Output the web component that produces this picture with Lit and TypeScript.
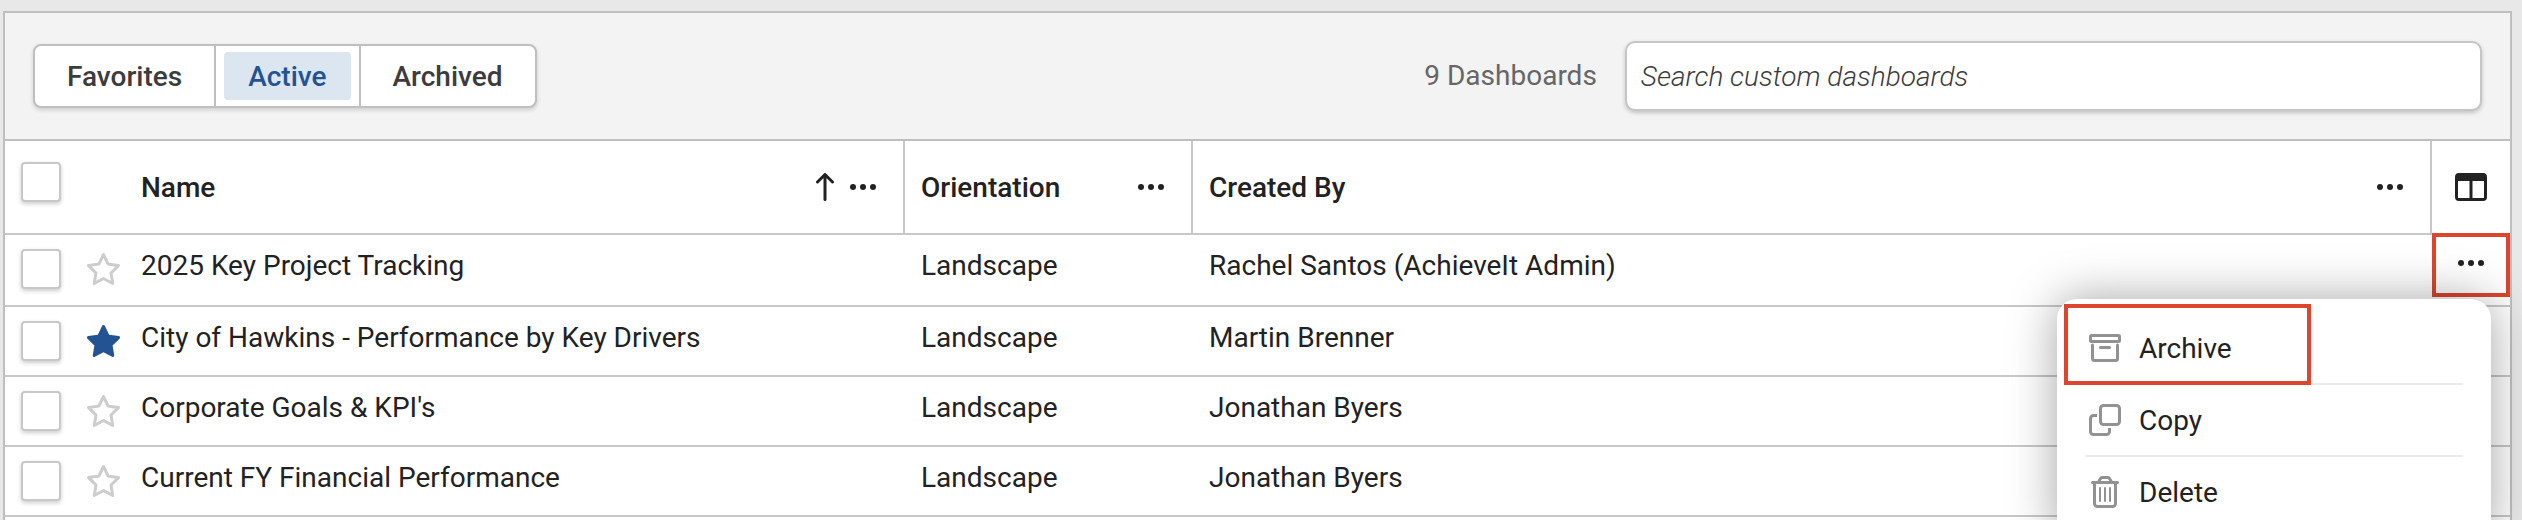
import { LitElement, html, css, svg, nothing } from "lit";
import { customElement, state } from "lit/decorators.js";

interface Dashboard {
  name: string;
  orientation: string;
  createdBy: string;
  favorite: boolean;
}

const DASHBOARDS: Dashboard[] = [
  { name: "2025 Key Project Tracking", orientation: "Landscape", createdBy: "Rachel Santos (AchieveIt Admin)", favorite: false },
  { name: "City of Hawkins - Performance by Key Drivers", orientation: "Landscape", createdBy: "Martin Brenner", favorite: true },
  { name: "Corporate Goals & KPI's", orientation: "Landscape", createdBy: "Jonathan Byers", favorite: false },
  { name: "Current FY Financial Performance", orientation: "Landscape", createdBy: "Jonathan Byers", favorite: false },
];

const TABS = ["Favorites", "Active", "Archived"];

const STAR_OUTER =
  "M287.9 0c9.2 0 17.6 5.2 21.6 13.5l68.6 141.3 153.2 22.6c9 1.3 16.5 7.6 19.3 16.3s.5 18.1-5.9 24.5L433.6 328.4l26.2 155.6c1.5 9-2.2 18.1-9.7 23.5s-17.3 6-25.3 1.7l-137-73.2L151 509.1c-8.1 4.3-17.9 3.7-25.3-1.7s-11.2-14.5-9.7-23.5l26.2-155.6L31.1 218.2c-6.5-6.4-8.7-15.9-5.9-24.5s10.3-14.9 19.3-16.3l153.2-22.6L266.3 13.5C270.4 5.2 278.7 0 287.9 0z";
const STAR_INNER =
  "M287.9 79L235.4 187.2c-3.5 7.1-10.2 12.1-18.1 13.3L99 217.9 184.9 303c5.5 5.5 8.1 13.3 6.8 21L171.4 443.7l105.2-56.2c7.1-3.8 15.6-3.8 22.6 0l105.2 56.2L384.2 324.1c-1.3-7.7 1.2-15.5 6.8-21l85.9-85.1L358.6 200.5c-7.8-1.2-14.6-6.1-18.1-13.3L287.9 79z";

const dots = html`<svg class="dots" viewBox="0 0 26 6" width="26" height="6" aria-hidden="true">
  <circle cx="3" cy="3" r="3" /><circle cx="13" cy="3" r="3" /><circle cx="23" cy="3" r="3" />
</svg>`;

const star = (on: boolean) => html`<svg class="star ${on ? "on" : ""}" viewBox="24 0 528 512" width="33" height="32" aria-hidden="true">
  <path fill-rule="evenodd" d=${on ? STAR_OUTER : STAR_OUTER + STAR_INNER} />
</svg>`;

const arrowUp = html`<svg class="line" viewBox="0 0 18 28" width="18" height="28" aria-hidden="true">
  <path d="M9 26.500V2M1.500 9L9 1.500L16.500 9" />
</svg>`;

const columnsIcon = html`<svg viewBox="0 0 32 28" width="32" height="28" aria-hidden="true">
  <path fill-rule="evenodd" d="M4 0h24a4 4 0 0 1 4 4v20a4 4 0 0 1-4 4H4a4 4 0 0 1-4-4V4a4 4 0 0 1 4-4zM3 8v16.500a.5.5 0 0 0 .5.5H14.500V8zM17.500 8v17H28.500a.5.5 0 0 0 .5-.5V8z" />
</svg>`;

const ICONS = {
  archive: svg`<rect x="1.500" y="3.500" width="29" height="6" rx="1" />
    <path d="M3.500 13v13.500a2 2 0 0 0 2 2h21a2 2 0 0 0 2-2V13M11.500 15.500h9" />`,
  copy: svg`<rect x="11.500" y="1.500" width="19" height="19" rx="3" />
    <path class="butt" d="M8 11.500H4.500a3 3 0 0 0-3 3v13a3 3 0 0 0 3 3h13a3 3 0 0 0 3-3V24" />`,
  trash: svg`<path d="M3.500 6.500h25M9.500 6l2-3.500a2 2 0 0 1 1.800-1h5.400a2 2 0 0 1 1.800 1l2 3.500M5.500 7v20.500a3 3 0 0 0 3 3h15a3 3 0 0 0 3-3V7" />
    <path class="thin" d="M11 12v13M16 12v13M21 12v13" />`,
};

const MENU: { label: string; icon: keyof typeof ICONS }[] = [
  { label: "Archive", icon: "archive" },
  { label: "Copy", icon: "copy" },
  { label: "Delete", icon: "trash" },
];

@customElement("app-root")
export class AppRoot extends LitElement {
  @state() private tab = "Active";

  static styles = css`
    :host {
      display: flex;
      height: 100vh;
      overflow: hidden;
      box-sizing: border-box;
      padding: 11px 10px 0 3px;
      background: #e8e8e8;
      color: #222;
      font: 400 28px/42px Roboto, sans-serif;
    }
    * { box-sizing: border-box; }
    button, input { font: inherit; color: inherit; margin: 0; }
    button { border: 0; padding: 0; background: none; cursor: pointer; }
    svg { display: block; fill: currentColor; }

    .panel {
      flex: 1;
      min-width: 0;
      background: #fff;
      border: 2px solid #bfbfbf;
      border-bottom: 0;
    }
    .toolbar {
      display: flex;
      align-items: center;
      padding: 28px;
      height: 128px;
      background: #f3f3f3;
      border-bottom: 2px solid #bfbfbf;
    }
    .tabs {
      display: flex;
      height: 64px;
      border: 2px solid #bfbfbf;
      border-radius: 8px;
      background: #fff;
      box-shadow: 0 2px 4px rgba(0, 0, 0, 0.16);
    }
    .tab {
      display: flex;
      padding: 6px 8px;
      color: #3c3c3c;
      font-weight: 500;
    }
    .tab + .tab { border-left: 2px solid #bfbfbf; }
    .tab span {
      display: flex;
      align-items: center;
      padding: 2px 24px 0;
      border-radius: 4px;
    }
    .tab.selected span { background: #dce6f0; color: #235393; }
    .count { margin-left: auto; color: #666; }
    .search {
      width: 35%;
      height: 70px;
      margin-left: 28px;
      padding: 0 14px;
      border: 2px solid #c6c6c6;
      border-radius: 10px;
      background: #fff;
      box-shadow: 0 2px 4px rgba(0, 0, 0, 0.2);
      outline: none;
    }
    .search::placeholder {
      color: #3c3c3c;
      font-style: italic;
      font-weight: 300;
      opacity: 1;
    }

    .grid {
      width: 100%;
      table-layout: fixed;
      border-collapse: separate;
      border-spacing: 0;
    }
    .c-check { width: 66px; }
    .c-star { width: 54px; }
    .c-name { width: 780px; }
    .c-orient { width: 288px; }
    .c-act { width: 78px; }
    th, td {
      padding: 0 16px;
      text-align: left;
      border-bottom: 2px solid #c8c8c8;
    }
    th { height: 94px; font-weight: 500; }
    th.divided { border-right: 2px solid #c8c8c8; }
    th.pick { padding-bottom: 10px; }
    .head { display: flex; align-items: center; gap: 16px; padding-right: 11px; }
    .head span { margin-right: auto; padding-top: 2px; }
    td { height: 70px; padding-top: 10px; vertical-align: top; }
    tr:first-child td { height: 72px; }
    td.pick { padding-top: 14px; }
    td.fav { padding-top: 18px; }
    .act { padding-left: 0; padding-right: 0; position: relative; }
    .act button { display: flex; width: 100%; height: 36px; align-items: center; justify-content: center; }

    .check {
      display: block;
      appearance: none;
      width: 40px;
      height: 40px;
      border: 2px solid #c8c8c8;
      border-radius: 4px;
      background: #fff;
      box-shadow: 0 2px 4px rgba(0, 0, 0, 0.2);
    }
    .line { fill: none; stroke: currentColor; stroke-width: 3; stroke-linecap: round; stroke-linejoin: round; }
    .star { fill: #cdcdcd; }
    .star.on { fill: #235393; }

    .callout {
      position: absolute;
      border: 4px solid #dd452e;
      pointer-events: none;
    }
    .callout.on-row { inset: -2px 0 auto 0; height: 64px; }
    .callout.on-item { top: 5px; left: 7px; width: 247px; height: 81px; }

    .menu {
      position: absolute;
      z-index: 2;
      top: 64px;
      right: 19px;
      width: 434px;
      padding: 14px 28px;
      border-radius: 20px;
      background: #fff;
      box-shadow: 0 0 48px rgba(0, 0, 0, 0.36);
    }
    .menu .item {
      display: flex;
      justify-content: flex-start;
      gap: 18px;
      width: 100%;
      height: 72px;
      padding: 0 4px;
      border-bottom: 2px solid #ebebeb;
    }
    .menu .item span { padding-top: 2px; }
    .menu svg { fill: none; stroke: #929292; stroke-width: 3; stroke-linecap: round; stroke-linejoin: round; }
    .menu svg .thin { stroke-width: 2; }
    .menu svg .butt { stroke-linecap: butt; }
  `;

  private header(label: string, sorted = false) {
    return html`<th class="divided" scope="col">
      <div class="head">
        <span>${label}</span>
        ${sorted ? arrowUp : nothing}
        <button aria-label="${label} options">${dots}</button>
      </div>
    </th>`;
  }

  private menu() {
    return html`<div class="menu" role="menu">
      ${MENU.map(
        (m) => html`<button class="item" role="menuitem">
          <svg viewBox="0 0 32 32" width="32" height="32" aria-hidden="true">${ICONS[m.icon]}</svg>
          <span>${m.label}</span>
        </button>`,
      )}
      <div class="callout on-item"></div>
    </div>`;
  }

  private row(d: Dashboard, i: number) {
    return html`<tr>
      <td class="pick"><input class="check" type="checkbox" aria-label="Select ${d.name}" /></td>
      <td class="fav"><button aria-label="Favorite" aria-pressed=${d.favorite}>${star(d.favorite)}</button></td>
      <td>${d.name}</td>
      <td>${d.orientation}</td>
      <td>${d.createdBy}</td>
      <td class="act">
        <button aria-label="Actions">${dots}</button>
        ${i === 0 ? html`<div class="callout on-row"></div>${this.menu()}` : nothing}
      </td>
    </tr>`;
  }

  render() {
    return html`<main class="panel">
      <div class="toolbar">
        <div class="tabs">
          ${TABS.map(
            (t) => html`<button
              class="tab ${t === this.tab ? "selected" : ""}"
              aria-pressed=${t === this.tab}
              @click=${() => (this.tab = t)}
            ><span>${t}</span></button>`,
          )}
        </div>
        <div class="count">9 Dashboards</div>
        <input class="search" type="text" aria-label="Search custom dashboards" placeholder="Search custom dashboards" />
      </div>
      <table class="grid">
        <colgroup>
          <col class="c-check" /><col class="c-star" /><col class="c-name" />
          <col class="c-orient" /><col /><col class="c-act" />
        </colgroup>
        <thead>
          <tr>
            <th class="pick"><input class="check" type="checkbox" aria-label="Select all" /></th>
            <th></th>
            ${this.header("Name", true)} ${this.header("Orientation")} ${this.header("Created By")}
            <th class="act"><button aria-label="Choose columns">${columnsIcon}</button></th>
          </tr>
        </thead>
        <tbody>
          ${DASHBOARDS.map((d, i) => this.row(d, i))}
        </tbody>
      </table>
    </main>`;
  }
}
